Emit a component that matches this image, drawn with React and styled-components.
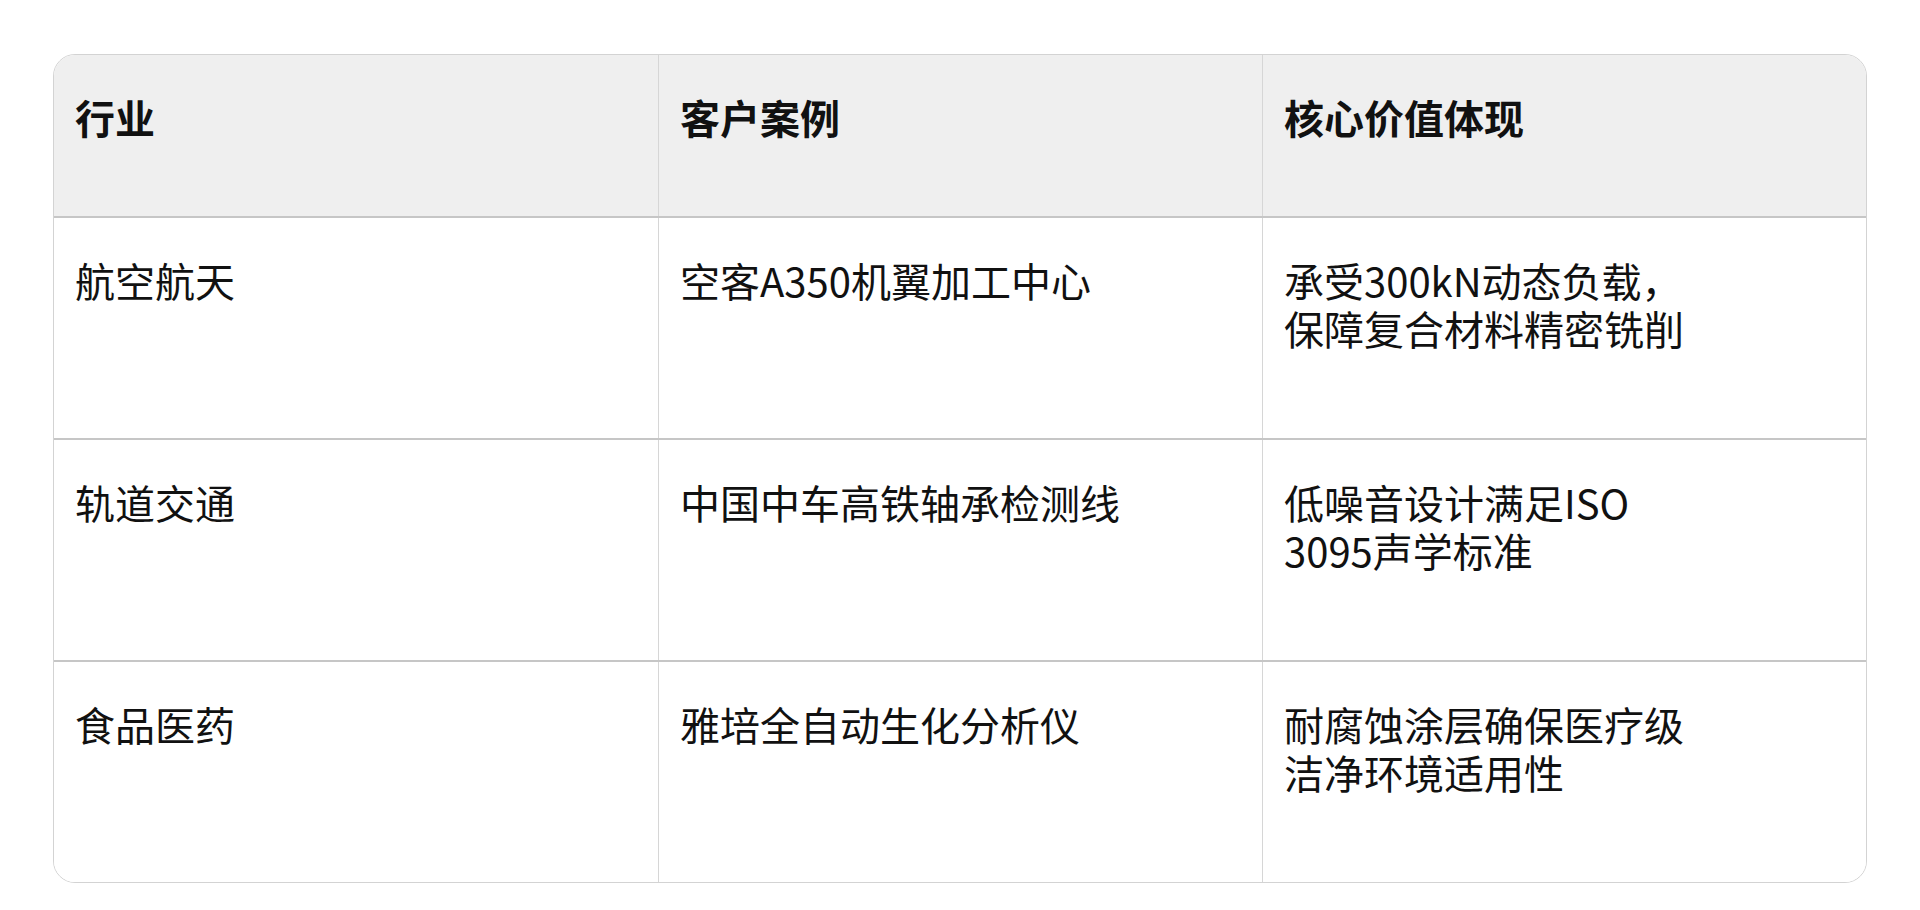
import React from 'react'
import styled, { createGlobalStyle } from 'styled-components'

const GlobalStyle = createGlobalStyle`
  html, body {
    margin: 0;
    padding: 0;
    background: #fff;
  }
  body {
    font-family: "Noto Sans CJK SC", "Noto Sans", sans-serif;
    color: #111;
  }
`

const rows = [
  ['航空航天', '空客A350机翼加工中心', '承受300kN动态负载，保障复合材料精密铣削'],
  ['轨道交通', '中国中车高铁轴承检测线', '低噪音设计满足ISO 3095声学标准'],
  ['食品医药', '雅培全自动生化分析仪', '耐腐蚀涂层确保医疗级洁净环境适用性'],
]

const App = () => {
  return (
    <>
      <GlobalStyle />
      <Page>
        <Table>
          <Row $head>
            <Cell $head>行业</Cell>
            <Cell $head>客户案例</Cell>
            <Cell $head>核心价值体现</Cell>
          </Row>
          {rows.map(([industry, client, value]) => (
            <Row key={industry}>
              <Cell>{industry}</Cell>
              <Cell>{client}</Cell>
              <Cell>
                <Wrap>{value}</Wrap>
              </Cell>
            </Row>
          ))}
        </Table>
      </Page>
    </>
  )
}

const Page = styled.div`
  padding: 54px 0 0 53px;
`

const Table = styled.div`
  width: 1814px;
  box-sizing: border-box;
  border: 1px solid #d3d3d3;
  border-radius: 22px;
  overflow: hidden;
  display: flex;
  flex-direction: column;
`

const Row = styled.div`
  display: grid;
  grid-template-columns: repeat(3, 1fr);
  box-sizing: border-box;
  height: ${(p) => (p.$head ? '161px' : '222px')};
  background: ${(p) => (p.$head ? '#efefef' : '#fff')};

  & + & {
    border-top: 2px solid #c6c6c6;
  }
`

const Cell = styled.div`
  padding: 38px 20px 0 21px;
  font-size: 40px;
  line-height: 48px;
  font-weight: ${(p) => (p.$head ? 700 : 400)};

  & + & {
    border-left: 1px solid #d6d6d6;
  }
`

const Wrap = styled.div`
  max-width: 410px;
`

export default App
